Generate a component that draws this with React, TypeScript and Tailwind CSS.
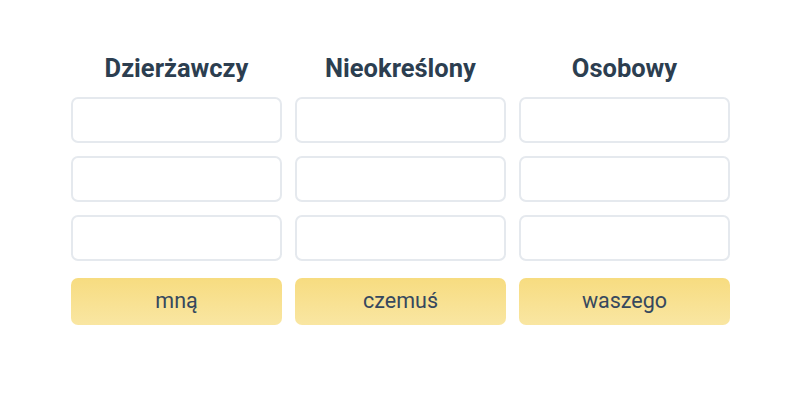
import React from "react";

const cols = [
  { title: "Dzierżawczy", word: "mną" },
  { title: "Nieokreślony", word: "czemuś" },
  { title: "Osobowy", word: "waszego" },
];

export default function App() {
  return (
    <div className="w-[800px] h-[400px] bg-white flex justify-center pt-[50px] pl-[1px]" style={{ fontFamily: "Roboto, 'Noto Sans', sans-serif" }}>
      <div className="flex gap-[13px]">
        {cols.map((c) => (
          <div key={c.title} className="w-[211px] flex flex-col">
            <div className="h-[37px] flex items-center justify-center text-[25.5px] font-bold text-[#2c3e50] mb-[10px]">{c.title}</div>
            <div className="flex flex-col gap-[13px]">
              {[0, 1, 2].map((i) => (
                <div key={i} className="h-[46px] rounded-[7px] border-2 border-[#e5e9ee] bg-white" />
              ))}
            </div>
            <div className="mt-[17px] h-[47px] rounded-[7px] bg-gradient-to-b from-[#f7dc80] to-[#f9e6a2] flex items-center justify-center text-[21.5px] text-[#36485e]">
              {c.word}
            </div>
          </div>
        ))}
      </div>
    </div>
  );
}
